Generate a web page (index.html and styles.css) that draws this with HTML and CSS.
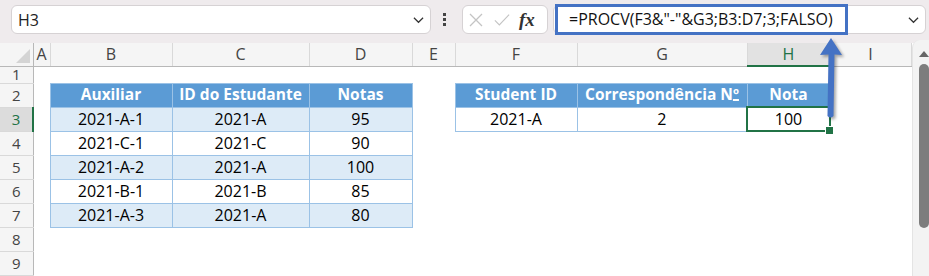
FILE: index.html
```html
<!DOCTYPE html>
<html lang="pt">
<head>
  <meta charset="UTF-8">
  <title>PROCV com coluna auxiliar</title>
  <link rel="stylesheet" href="styles.css">
</head>
<body>
  <div class="app">

    <!-- Formula bar -->
    <div class="topbar">
      <div class="namebox">
        <span>H3</span>
        <svg class="chev" viewBox="0 0 12 8"><path d="M1 1.5l5 5 5-5"/></svg>
      </div>
      <div class="kebab"><i></i><i></i><i></i></div>
      <div class="fx-tools">
        <svg class="tool" viewBox="0 0 16 16"><path d="M2 2l12 12M14 2L2 14"/></svg>
        <svg class="tool" viewBox="0 0 18 16"><path d="M1 8.5l5 5L17 2"/></svg>
        <span class="fx">fx</span>
      </div>
      <div class="formula">
        <span class="formula-hl">=PROCV(F3&amp;"-"&amp;G3;B3:D7;3;FALSO)</span>
        <svg class="chev" viewBox="0 0 12 8"><path d="M1 1.5l5 5 5-5"/></svg>
      </div>
    </div>

    <!-- Worksheet -->
    <div class="sheet">
      <table class="grid">
        <colgroup>
          <col class="w-rh"><col class="w-a"><col class="w-b"><col class="w-c"><col class="w-d">
          <col class="w-e"><col class="w-f"><col class="w-g"><col class="w-h"><col class="w-i">
        </colgroup>
        <thead>
          <tr class="row-ch">
            <th class="corner"><span class="corner-tri"></span></th>
            <th class="ch">A</th><th class="ch">B</th><th class="ch">C</th><th class="ch">D</th>
            <th class="ch">E</th><th class="ch">F</th><th class="ch">G</th><th class="ch active">H</th><th class="ch">I</th>
          </tr>
        </thead>
        <tbody>
          <tr class="row-1">
            <th class="rh">1</th><td></td><td></td><td></td><td></td><td></td><td></td><td></td><td></td><td></td>
          </tr>
          <tr>
            <th class="rh">2</th><td></td>
            <td class="t-head">Auxiliar</td><td class="t-head">ID do Estudante</td><td class="t-head">Notas</td>
            <td></td>
            <td class="t-head">Student ID</td><td class="t-head">Correspondência N<span class="ord">º</span></td><td class="t-head">Nota</td>
            <td></td>
          </tr>
          <tr>
            <th class="rh active">3</th><td></td>
            <td class="t-band">2021-A-1</td><td class="t-band">2021-A</td><td class="t-band">95</td>
            <td></td>
            <td class="t-cell">2021-A</td><td class="t-cell">2</td><td class="t-cell sel">100</td>
            <td></td>
          </tr>
          <tr>
            <th class="rh">4</th><td></td>
            <td class="t-cell">2021-C-1</td><td class="t-cell">2021-C</td><td class="t-cell">90</td>
            <td></td><td></td><td></td><td></td><td></td>
          </tr>
          <tr>
            <th class="rh">5</th><td></td>
            <td class="t-band">2021-A-2</td><td class="t-band">2021-A</td><td class="t-band">100</td>
            <td></td><td></td><td></td><td></td><td></td>
          </tr>
          <tr>
            <th class="rh">6</th><td></td>
            <td class="t-cell">2021-B-1</td><td class="t-cell">2021-B</td><td class="t-cell">85</td>
            <td></td><td></td><td></td><td></td><td></td>
          </tr>
          <tr>
            <th class="rh">7</th><td></td>
            <td class="t-band">2021-A-3</td><td class="t-band">2021-A</td><td class="t-band">80</td>
            <td></td><td></td><td></td><td></td><td></td>
          </tr>
          <tr>
            <th class="rh">8</th><td></td><td></td><td></td><td></td><td></td><td></td><td></td><td></td><td></td>
          </tr>
          <tr>
            <th class="rh">9</th><td></td><td></td><td></td><td></td><td></td><td></td><td></td><td></td><td></td>
          </tr>
        </tbody>
      </table>

      <!-- Vertical scrollbar -->
      <div class="vscroll">
        <span class="up"></span>
        <span class="thumb"></span>
      </div>
    </div>

    <!-- Callout arrow from H3 to the formula -->
    <svg class="arrow" viewBox="0 0 34 90">
      <path d="M16 4 L27 21 L19.5 20.5 L18.5 82 Q15.5 85 12.5 82 L13.5 20.5 L5 21 Z"/>
    </svg>
  </div>
</body>
</html>
```

FILE: styles.css
```css
/* palette */
:root {
  --bar-bg: #efebed;
  --box-border: #d6d2d4;
  --hdr-bg: #f5f5f5;
  --hdr-line: #d9d9d9;
  --hdr-edge: #b8b8b8;
  --hdr-text: #444;
  --xl-green: #217346;
  --tbl-head: #5b9bd5;
  --tbl-band: #ddebf7;
  --tbl-line: #9bc2e6;
  --callout: #4472c4;
  --font: "Open Sans", "Noto Sans", sans-serif;
}

* {
  box-sizing: border-box;
}
html, body {
  margin: 0;
  padding: 0;
}
body {
  width: 929px;
  height: 276px;
  overflow: hidden;
  background: #fff;
  font-family: var(--font);
  color: #000;
}

.app {
  position: relative;
  width: 929px;
  height: 276px;
}

/* === formula bar === */
.topbar {
  display: flex;
  align-items: flex-start;
  height: 43px;
  padding: 5px 3px 0 11px;
  background: var(--bar-bg);
}
.namebox {
  width: 420px;
  height: 29px;
  display: flex;
  align-items: center;
  justify-content: space-between;
  padding: 0 6px 0 6px;
  background: #fff;
  border: 1px solid var(--box-border);
  border-radius: 6px;
  font-size: 16px;
  color: #222;
}
.chev {
  width: 11px;
  height: 8px;
  fill: none;
  stroke: #333;
  stroke-width: 1.3;
}
.kebab {
  width: 4px;
  height: 29px;
  margin-left: 12px;
  display: flex;
  flex-direction: column;
  justify-content: center;
  gap: 2px;
}
.kebab i {
  display: block;
  width: 3px;
  height: 3px;
  background: #444;
}
.fx-tools {
  width: 86px;
  height: 29px;
  margin-left: 15px;
  display: flex;
  align-items: center;
  padding-left: 5px;
  gap: 10px;
  background: #fff;
  border: 1px solid var(--box-border);
  border-radius: 6px;
}
.tool {
  width: 16px;
  height: 16px;
  fill: none;
  stroke: #c4c4c4;
  stroke-width: 1.3;
}
.fx {
  font-family: "Liberation Serif", "DejaVu Serif", serif;
  font-style: italic;
  font-weight: bold;
  font-size: 19px;
  color: #333;
  margin-left: -1px;
  line-height: 1;
}
.formula {
  width: 373px;
  height: 29px;
  margin-left: 5px;
  display: flex;
  align-items: center;
  justify-content: space-between;
  padding-right: 6px;
  background: #fff;
  border: 1px solid var(--box-border);
  border-radius: 6px;
}
.formula-hl {
  height: 31px;
  margin: -1px 0 0 1px;
  display: flex;
  align-items: center;
  padding: 0 12px 0 11px;
  border: 3px solid var(--callout);
  font-size: 16px;
  color: #111;
  white-space: nowrap;
}

/* === worksheet grid === */
.sheet {
  display: flex;
  height: 233px;
}
.grid {
  width: 911px;
  table-layout: fixed;
  border-collapse: collapse;
  border-spacing: 0;
  font-size: 16px;
  align-self: flex-start;
}
.w-rh { width: 33px; }
.w-a { width: 17px; }
.w-b { width: 122px; }
.w-c { width: 137px; }
.w-d { width: 103px; }
.w-e { width: 43px; }
.w-f { width: 122px; }
.w-g { width: 170px; }
.w-h { width: 83px; }
.w-i { width: 81px; }

.grid tr { height: 24px; }
.grid .row-ch { height: 23px; }
.grid .row-1 { height: 17px; }

.grid th,
.grid td {
  padding: 0;
  text-align: center;
  white-space: nowrap;
  overflow: hidden;
  line-height: 1;
}

.corner {
  position: relative;
  background: var(--hdr-bg);
  border-right: 1px solid var(--hdr-edge);
  border-bottom: 1px solid var(--hdr-edge);
}
.corner-tri {
  position: absolute;
  right: 3px;
  bottom: 3px;
  width: 0;
  height: 0;
  border-left: 14px solid transparent;
  border-bottom: 14px solid #d4d4d4;
}
.ch {
  background: var(--hdr-bg);
  border-right: 1px solid var(--hdr-line);
  border-bottom: 1px solid var(--hdr-edge);
  font-weight: normal;
  color: var(--hdr-text);
  font-size: 16px;
}
.ch.active {
  background: #e2e2e2;
  color: var(--xl-green);
  border-bottom: 2px solid var(--xl-green);
}
.grid .rh {
  background: var(--hdr-bg);
  border-right: 1px solid var(--hdr-edge);
  border-bottom: 1px solid var(--hdr-line);
  font-weight: normal;
  color: var(--hdr-text);
  font-size: 15px;
  overflow: visible;
}
.grid .row-1 .rh {
  line-height: 15px;
}
.rh.active {
  background: #dcdcdc;
  color: var(--xl-green);
  border-right: 2px solid var(--xl-green);
}

/* formatted tables */
.t-head {
  background: var(--tbl-head);
  color: #fff;
  font-weight: bold;
  font-size: 15.5px;
  border: 1px solid var(--tbl-line);
}
.ord {
  text-decoration: underline;
  text-decoration-thickness: 1.5px;
  text-underline-offset: -1px;
}
.t-band {
  background: var(--tbl-band);
  border: 1px solid var(--tbl-line);
}
.t-cell {
  background: #fff;
  border: 1px solid var(--tbl-line);
}
.t-cell.sel {
  position: relative;
  overflow: visible;
  border: 2px solid var(--xl-green);
}
.t-cell.sel::after {
  content: "";
  position: absolute;
  right: -5px;
  bottom: -5px;
  width: 7px;
  height: 7px;
  background: var(--xl-green);
  border: 1px solid #fff;
}

/* scrollbar */
.vscroll {
  position: relative;
  width: 18px;
  margin-top: -3px;
  background: #f3f3f3;
  border-left: 1px solid #e4e4e4;
  border-radius: 8px 0 0 0;
}
.up {
  position: absolute;
  top: 11px;
  left: 6px;
  width: 0;
  height: 0;
  border-left: 5px solid transparent;
  border-right: 5px solid transparent;
  border-bottom: 6px solid #666;
}
.thumb {
  position: absolute;
  top: 24px;
  left: 6px;
  width: 10px;
  height: 164px;
  background: #7d7d7d;
  border-radius: 5px;
}

/* annotation arrow, drawn over the sheet */
.arrow {
  position: absolute;
  left: 815px;
  top: 34px;
  width: 34px;
  height: 90px;
  fill: var(--callout);
  filter: drop-shadow(2px 2px 1.5px rgba(0, 0, 0, 0.35));
}
```
